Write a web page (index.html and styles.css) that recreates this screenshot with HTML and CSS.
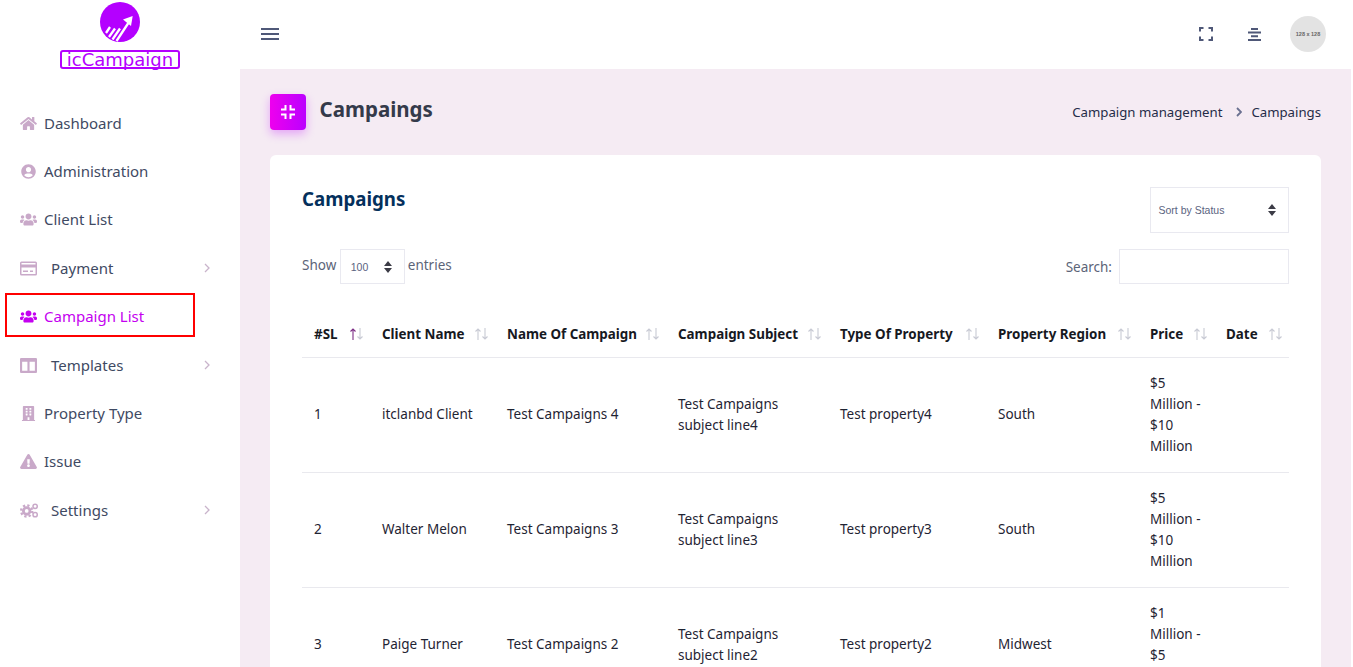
FILE: index.html
```html
<!DOCTYPE html>
<html lang="en">
<head>
<meta charset="utf-8">
<title>Campaigns</title>
<link rel="stylesheet" href="styles.css">
</head>
<body>
<div class="app">
  <aside class="sidebar">
    <div class="brand">
      <svg class="brand-mark" viewBox="0 0 40 40" width="40" height="40">
        <circle cx="20" cy="20" r="20" fill="#b400ff"/>
        <g stroke="#fff" stroke-width="2.300" fill="none">
          <path d="M6 31l4-6M9 35l6-8.500M12.500 37.500l7.500-11M16.500 39L29 20"/>
        </g>
        <path d="M32.700 14l-9.700 3.500 8 6.500z" fill="#fff"/>
      </svg>
      <div class="brand-name">icCampaign</div>
    </div>
    <nav class="nav">
      <a class="nav-item"><svg class="ico" viewBox="0 0 576 512"><path d="M280.37 148.26L96 300.11V464a16 16 0 0 0 16 16l112.06-.29a16 16 0 0 0 15.92-16V368a16 16 0 0 1 16-16h64a16 16 0 0 1 16 16v95.64a16 16 0 0 0 16 16.05L464 480a16 16 0 0 0 16-16V300L295.67 148.26a12.19 12.19 0 0 0-15.3 0zM571.6 251.47L488 182.56V44.05a12 12 0 0 0-12-12h-56a12 12 0 0 0-12 12v72.61L318.47 43a48 48 0 0 0-61 0L4.34 251.47a12 12 0 0 0-1.6 16.9l25.5 31A12 12 0 0 0 45.15 301l235.22-193.74a12.19 12.19 0 0 1 15.3 0L530.9 301a12 12 0 0 0 16.9-1.6l25.5-31a12 12 0 0 0-1.7-16.93z"/></svg><span>Dashboard</span></a>
      <a class="nav-item"><svg class="ico" viewBox="0 0 496 512"><path d="M248 8C111 8 0 119 0 256s111 248 248 248 248-111 248-248S385 8 248 8zm0 96c48.6 0 88 39.4 88 88s-39.4 88-88 88-88-39.4-88-88 39.4-88 88-88zm0 344c-58.7 0-111.3-26.6-146.5-68.2 18.8-35.4 55.6-59.8 98.5-59.8 2.4 0 4.8.4 7.1 1.1 13 4.2 26.6 6.9 40.9 6.9 14.3 0 28-2.7 40.9-6.9 2.3-.7 4.7-1.1 7.1-1.1 42.9 0 79.7 24.4 98.5 59.8C359.3 421.4 306.7 448 248 448z"/></svg><span>Administration</span></a>
      <a class="nav-item"><svg class="ico" viewBox="0 0 640 512"><path d="M96 224c35.3 0 64-28.7 64-64s-28.7-64-64-64-64 28.7-64 64 28.7 64 64 64zm448 0c35.3 0 64-28.7 64-64s-28.7-64-64-64-64 28.7-64 64 28.7 64 64 64zm32 32h-64c-17.6 0-33.5 7.1-45.1 18.6 40.3 22.1 68.9 62 75.1 109.4h66c17.7 0 32-14.3 32-32v-32c0-35.3-28.7-64-64-64zm-256 0c61.9 0 112-50.1 112-112S381.9 32 320 32 208 82.1 208 144s50.1 112 112 112zm76.8 32h-8.3c-20.8 10-43.9 16-68.5 16s-47.6-6-68.5-16h-8.3C179.6 288 128 339.6 128 403.2V432c0 26.5 21.5 48 48 48h288c26.5 0 48-21.5 48-48v-28.8c0-63.6-51.6-115.2-115.2-115.2zm-223.7-13.4C161.5 263.1 145.6 256 128 256H64c-35.3 0-64 28.7-64 64v32c0 17.7 14.3 32 32 32h65.9c6.3-47.4 34.9-87.3 75.2-109.4z"/></svg><span>Client List</span></a>
      <a class="nav-item has-sub"><svg class="ico" viewBox="0 0 17 14"><path fill-rule="evenodd" d="M1.5 0h14A1.5 1.5 0 0 1 17 1.5v11a1.5 1.5 0 0 1-1.5 1.5h-14A1.5 1.5 0 0 1 0 12.500v-11A1.500 1.500 0 0 1 1.500 0zM1.500 1.500V3h14V1.500zM1.500 6v6.500h14V6zM3 9h5v1.500H3zM10 9h3v1.500h-3z"/></svg><span>Payment</span><svg class="chev" viewBox="0 0 6 10"><path d="M1 1l4 4-4 4"/></svg></a>
      <div class="nav-active-wrap">
        <a class="nav-item active"><svg class="ico" viewBox="0 0 640 512"><path d="M96 224c35.3 0 64-28.7 64-64s-28.7-64-64-64-64 28.7-64 64 28.7 64 64 64zm448 0c35.3 0 64-28.7 64-64s-28.7-64-64-64-64 28.7-64 64 28.7 64 64 64zm32 32h-64c-17.6 0-33.5 7.1-45.1 18.6 40.3 22.1 68.9 62 75.1 109.4h66c17.7 0 32-14.3 32-32v-32c0-35.3-28.7-64-64-64zm-256 0c61.9 0 112-50.1 112-112S381.9 32 320 32 208 82.1 208 144s50.1 112 112 112zm76.8 32h-8.3c-20.8 10-43.9 16-68.5 16s-47.6-6-68.5-16h-8.3C179.6 288 128 339.6 128 403.2V432c0 26.5 21.5 48 48 48h288c26.5 0 48-21.5 48-48v-28.8c0-63.6-51.6-115.2-115.2-115.2zm-223.7-13.4C161.5 263.1 145.6 256 128 256H64c-35.3 0-64 28.7-64 64v32c0 17.7 14.3 32 32 32h65.9c6.3-47.4 34.9-87.3 75.2-109.4z"/></svg><span>Campaign List</span></a>
        <div class="highlight"></div>
      </div>
      <a class="nav-item has-sub"><svg class="ico" viewBox="0 0 16 14"><path fill-rule="evenodd" d="M1 0h14a1 1 0 0 1 1 1v12a1 1 0 0 1-1 1H1a1 1 0 0 1-1-1V1a1 1 0 0 1 1-1zM2 3.500V12h5V3.500zM9 3.500V12h5V3.500z"/></svg><span>Templates</span><svg class="chev" viewBox="0 0 6 10"><path d="M1 1l4 4-4 4"/></svg></a>
      <a class="nav-item"><svg class="ico" viewBox="0 0 448 512"><path d="M436 480h-20V24c0-13.300-10.700-24-24-24H56C42.700 0 32 10.700 32 24v456H12c-6.600 0-12 5.400-12 12v20h448v-20c0-6.600-5.400-12-12-12zM128 76c0-6.600 5.400-12 12-12h40c6.600 0 12 5.400 12 12v40c0 6.600-5.400 12-12 12h-40c-6.600 0-12-5.400-12-12V76zm0 96c0-6.600 5.400-12 12-12h40c6.600 0 12 5.400 12 12v40c0 6.600-5.400 12-12 12h-40c-6.600 0-12-5.400-12-12v-40zm52 148h-40c-6.600 0-12-5.400-12-12v-40c0-6.600 5.400-12 12-12h40c6.600 0 12 5.400 12 12v40c0 6.600-5.400 12-12 12zm76 160h-64v-84c0-6.600 5.400-12 12-12h40c6.600 0 12 5.400 12 12v84zm64-172c0 6.600-5.400 12-12 12h-40c-6.600 0-12-5.400-12-12v-40c0-6.600 5.400-12 12-12h40c6.600 0 12 5.400 12 12v40zm0-96c0 6.600-5.400 12-12 12h-40c-6.600 0-12-5.400-12-12v-40c0-6.600 5.400-12 12-12h40c6.600 0 12 5.400 12 12v40zm0-96c0 6.600-5.400 12-12 12h-40c-6.600 0-12-5.400-12-12V76c0-6.600 5.400-12 12-12h40c6.600 0 12 5.400 12 12v40z"/></svg><span>Property Type</span></a>
      <a class="nav-item"><svg class="ico" viewBox="0 0 576 512"><path d="M569.517 440.013C587.975 472.007 564.806 512 527.94 512H48.054c-36.937 0-59.999-40.055-41.577-71.987L246.423 24.995c18.467-32.009 64.72-31.951 83.154 0l239.94 415.018zM288 354c-25.405 0-46 20.595-46 46s20.595 46 46 46 46-20.595 46-46-20.595-46-46-46zm-43.673-165.346l7.418 136c.347 6.364 5.609 11.346 11.982 11.346h48.546c6.373 0 11.635-4.982 11.982-11.346l7.418-136c.375-6.874-5.098-12.654-11.982-12.654h-63.383c-6.884 0-12.356 5.780-11.981 12.654z"/></svg><span>Issue</span></a>
      <a class="nav-item has-sub"><svg class="ico" viewBox="0 0 20 16"><circle cx="7" cy="8.500" r="3.500" fill="none" stroke-width="3"/><circle cx="7" cy="8.500" r="6" fill="none" stroke-width="2.400" stroke-dasharray="2.400 2.300"/><circle cx="16" cy="3.500" r="2.300" fill="none" stroke-width="1.600"/><circle cx="16" cy="12.500" r="2.300" fill="none" stroke-width="1.600"/></svg><span>Settings</span><svg class="chev" viewBox="0 0 6 10"><path d="M1 1l4 4-4 4"/></svg></a>
    </nav>
  </aside>
  <div class="main">
    <header class="topbar">
      <svg class="burger" viewBox="0 0 18 12" width="18" height="12"><path d="M0 1h18M0 6h18M0 11h18"/></svg>
      <div class="top-right">
        <svg class="top-ico" viewBox="0 0 14 14" width="14" height="14"><path d="M1 4.500V1h3.500M9.500 1H13v3.500M13 9.500V13H9.500M4.500 13H1V9.500"/></svg>
        <svg class="top-ico" viewBox="0 0 13 13" width="13" height="13"><path d="M3 .9h7M0 4.600h13M3 8.200h7M0 11.900h13"/></svg>
        <div class="avatar">128 x 128</div>
      </div>
    </header>
    <main class="content">
      <div class="page-title">
        <div class="title-left">
          <div class="title-icon"><svg viewBox="0 0 14 14" width="14" height="14"><path d="M4.500 0v4.500H0M9.500 0v4.500H14M4.500 14V9.500H0M9.500 14V9.500H14"/></svg></div>
          <h1>Campaings</h1>
        </div>
        <div class="crumbs"><span>Campaign management</span><svg viewBox="0 0 6 10" width="6" height="10"><path d="M1 1l4 4-4 4"/></svg><span>Campaings</span></div>
      </div>
      <section class="card">
        <div class="card-head">
          <h2>Campaigns</h2>
          <div class="select select-status"><span>Sort by Status</span><svg class="updown" viewBox="0 0 8 12" width="8" height="12"><path d="M4 0l4 5H0zM4 12L0 7h8z"/></svg></div>
        </div>
        <div class="filters">
          <div class="show"><span>Show</span><div class="select select-len"><span>100</span><svg class="updown" viewBox="0 0 8 12" width="8" height="12"><path d="M4 0l4 5H0zM4 12L0 7h8z"/></svg></div><span>entries</span></div>
          <div class="search"><span class="search-label">Search:</span><div class="input"></div></div>
        </div>
        <table class="grid">
          <colgroup><col class="c1"><col class="c2"><col class="c3"><col class="c4"><col class="c5"><col class="c6"><col class="c7"><col class="c8"></colgroup>
          <thead>
            <tr>
              <th><div class="th"><span>#SL</span><svg class="sort asc" viewBox="0 0 14 14"><path class="up" d="M4 13V2M1.500 4.500L4 2l2.500 2.500"/><path class="down" d="M11 1v11M8.500 9.500L11 12l2.500-2.500"/></svg></div></th>
              <th><div class="th"><span>Client Name</span><svg class="sort" viewBox="0 0 14 14"><path class="up" d="M4 13V2M1.500 4.500L4 2l2.500 2.500"/><path class="down" d="M11 1v11M8.500 9.500L11 12l2.500-2.500"/></svg></div></th>
              <th><div class="th"><span>Name Of Campaign</span><svg class="sort" viewBox="0 0 14 14"><path class="up" d="M4 13V2M1.500 4.500L4 2l2.500 2.500"/><path class="down" d="M11 1v11M8.500 9.500L11 12l2.500-2.500"/></svg></div></th>
              <th><div class="th"><span>Campaign Subject</span><svg class="sort" viewBox="0 0 14 14"><path class="up" d="M4 13V2M1.500 4.500L4 2l2.500 2.500"/><path class="down" d="M11 1v11M8.500 9.500L11 12l2.500-2.500"/></svg></div></th>
              <th><div class="th"><span>Type Of Property</span><svg class="sort" viewBox="0 0 14 14"><path class="up" d="M4 13V2M1.500 4.500L4 2l2.500 2.500"/><path class="down" d="M11 1v11M8.500 9.500L11 12l2.500-2.500"/></svg></div></th>
              <th><div class="th"><span>Property Region</span><svg class="sort" viewBox="0 0 14 14"><path class="up" d="M4 13V2M1.500 4.500L4 2l2.500 2.500"/><path class="down" d="M11 1v11M8.500 9.500L11 12l2.500-2.500"/></svg></div></th>
              <th><div class="th"><span>Price</span><svg class="sort" viewBox="0 0 14 14"><path class="up" d="M4 13V2M1.500 4.500L4 2l2.500 2.500"/><path class="down" d="M11 1v11M8.500 9.500L11 12l2.500-2.500"/></svg></div></th>
              <th><div class="th"><span>Date</span><svg class="sort" viewBox="0 0 14 14"><path class="up" d="M4 13V2M1.500 4.500L4 2l2.500 2.500"/><path class="down" d="M11 1v11M8.500 9.500L11 12l2.500-2.500"/></svg></div></th>
            </tr>
          </thead>
          <tbody>
            <tr><td>1</td><td>itclanbd Client</td><td>Test Campaigns 4</td><td>Test Campaigns subject line4</td><td>Test property4</td><td>South</td><td>$5 Million - $10 Million</td><td></td></tr>
            <tr><td>2</td><td>Walter Melon</td><td>Test Campaigns 3</td><td>Test Campaigns subject line3</td><td>Test property3</td><td>South</td><td>$5 Million - $10 Million</td><td></td></tr>
            <tr><td>3</td><td>Paige Turner</td><td>Test Campaigns 2</td><td>Test Campaigns subject line2</td><td>Test property2</td><td>Midwest</td><td>$1 Million - $5 Million</td><td></td></tr>
          </tbody>
        </table>
      </section>
    </main>
  </div>
</div>
</body>
</html>
```
FILE: styles.css
```css
* { box-sizing: border-box; }
html, body { margin: 0; padding: 0; height: 667px; overflow: hidden; background: #fff; }
body { font-family: "Noto Sans", "Open Sans", sans-serif; font-size: 13.500px; line-height: 21px; color: #1f2433; padding-right: 2px; }
.app { display: flex; align-items: flex-start; }

.sidebar { width: 240px; flex: none; background: #fff; }
.brand { height: 99px; display: flex; flex-direction: column; align-items: center; padding-top: 2px; }
.brand-mark { display: block; }
.brand-name { margin-top: 8px; width: 120px; height: 19px; border: 2px solid #b400ff; border-radius: 3px; color: #b400ff; font-family: "DejaVu Sans", sans-serif; font-weight: 400; font-size: 18px; line-height: 15px; letter-spacing: 0; text-align: center; white-space: nowrap; }

.nav-item { display: flex; align-items: center; height: 48.375px; padding-left: 20px; font-size: 15px; color: #3f4a63; position: relative; }
.nav-item .ico { width: 17px; height: 15px; flex: none; fill: #c9a9c9; stroke: #c9a9c9; stroke-width: 0; margin-right: 7px; }
.nav-item.has-sub .ico { width: 17px; margin-right: 14px; }
.nav-item.has-sub:last-child .ico { width: 19px; margin-right: 12px; }
.nav-item .ico circle { stroke: #c9a9c9; }
.chev { position: absolute; right: 30px; top: 50%; margin-top: -5px; width: 6px; height: 10px; fill: none; stroke: #c9b4cb; stroke-width: 1.300; }
.nav-item.active { color: #c400f0; }
.nav-item.active .ico { fill: #c400f0; stroke: #c400f0; }
.nav-active-wrap { position: relative; }
.highlight { position: absolute; left: 5px; top: .5px; width: 190px; height: 44px; border: 2px solid #f00; pointer-events: none; }

.main { flex: 1; min-width: 0; background: #f5ebf3; }
.topbar { height: 69px; background: #fff; display: flex; align-items: center; justify-content: space-between; padding: 0 25px 1px 21px; }
.burger { fill: none; stroke: #4f5878; stroke-width: 2; }
.top-right { display: flex; align-items: center; }
.top-ico { fill: none; stroke: #4f5878; stroke-width: 2; }
.top-right .top-ico:first-child { margin-right: 35px; }
.top-right .top-ico:nth-child(2) { margin-right: 29px; }
.avatar { width: 36px; height: 36px; border-radius: 50%; background: #e3e3e3; color: #666; font-family: "Liberation Sans", sans-serif; font-size: 5.500px; font-weight: 700; display: flex; align-items: center; justify-content: center; white-space: nowrap; }

.content { padding: 25px 30px 30px; }
.page-title { display: flex; align-items: center; justify-content: space-between; height: 36px; margin-bottom: 25px; }
.title-left { display: flex; align-items: center; }
.title-icon { width: 36px; height: 36px; border-radius: 4px; background: linear-gradient(90deg, #ee00ee, #bb00ff); box-shadow: 0 4px 10px rgba(190, 0, 255, .3); display: flex; align-items: center; justify-content: center; margin-right: 13.500px; }
.title-icon svg { fill: none; stroke: #fff; stroke-width: 2; }
h1 { margin: 0 0 6px; font-size: 20.500px; line-height: 30px; font-weight: 700; color: #343a4a; }
.crumbs { display: flex; align-items: center; font-size: 13.200px; color: #252c48; }
.crumbs svg { margin: 0 9px 0 14px; fill: none; stroke: #6a7090; stroke-width: 1.800; }

.card { background: #fff; border-radius: 6px; padding: 32px 32px 30px; }
.card-head { display: flex; justify-content: space-between; align-items: flex-start; height: 62px; }
h2 { margin: 0; font-size: 18.700px; line-height: 24px; font-weight: 700; color: #04305c; }
.select { display: flex; align-items: center; justify-content: space-between; border: 1px solid #e9e9f0; background: #fff; font-family: "Liberation Sans", sans-serif; color: #5b6380; }
.select-status { width: 139px; height: 46px; padding: 0 12px 0 7.500px; font-size: 10.500px; }
.select-len { width: 65px; height: 35px; padding: 0 12px 0 10px; font-size: 10.500px; margin: 0 3px 0 3.500px; }
.updown { fill: #3c3c46; }
.filters { display: flex; justify-content: space-between; align-items: flex-start; height: 35px; margin-bottom: 27px; color: #5c6478; }
.show { display: flex; align-items: flex-start; line-height: 32px; }
.search { display: flex; align-items: center; height: 35px; gap: 7px; }
.search-label { padding-top: 2px; }
.input { width: 170px; height: 35px; border: 1px solid #e9e9f0; }

.grid { width: 987px; table-layout: fixed; border-collapse: collapse; color: #1f2433; }
.c1 { width: 68px; } .c2 { width: 125px; } .c3 { width: 171px; } .c4 { width: 162px; }
.c5 { width: 158px; } .c6 { width: 152px; } .c7 { width: 76px; } .c8 { width: 75px; }
th { padding: 12px 7px 11px 12px; text-align: left; font-weight: 700; font-size: 13.400px; color: #17191f; border-bottom: 1px solid #e9e9ee; height: 46px; white-space: nowrap; }
.th { display: flex; align-items: center; justify-content: space-between; }
.sort { width: 14px; height: 14px; flex: none; fill: none; stroke-width: 1.100; }
.sort .up, .sort .down { stroke: #c8cad4; }
.sort.asc .up { stroke: #7d2f86; }
td { padding: 15px 12px; vertical-align: middle; border-bottom: 1px solid #e9e9ee; }
```
